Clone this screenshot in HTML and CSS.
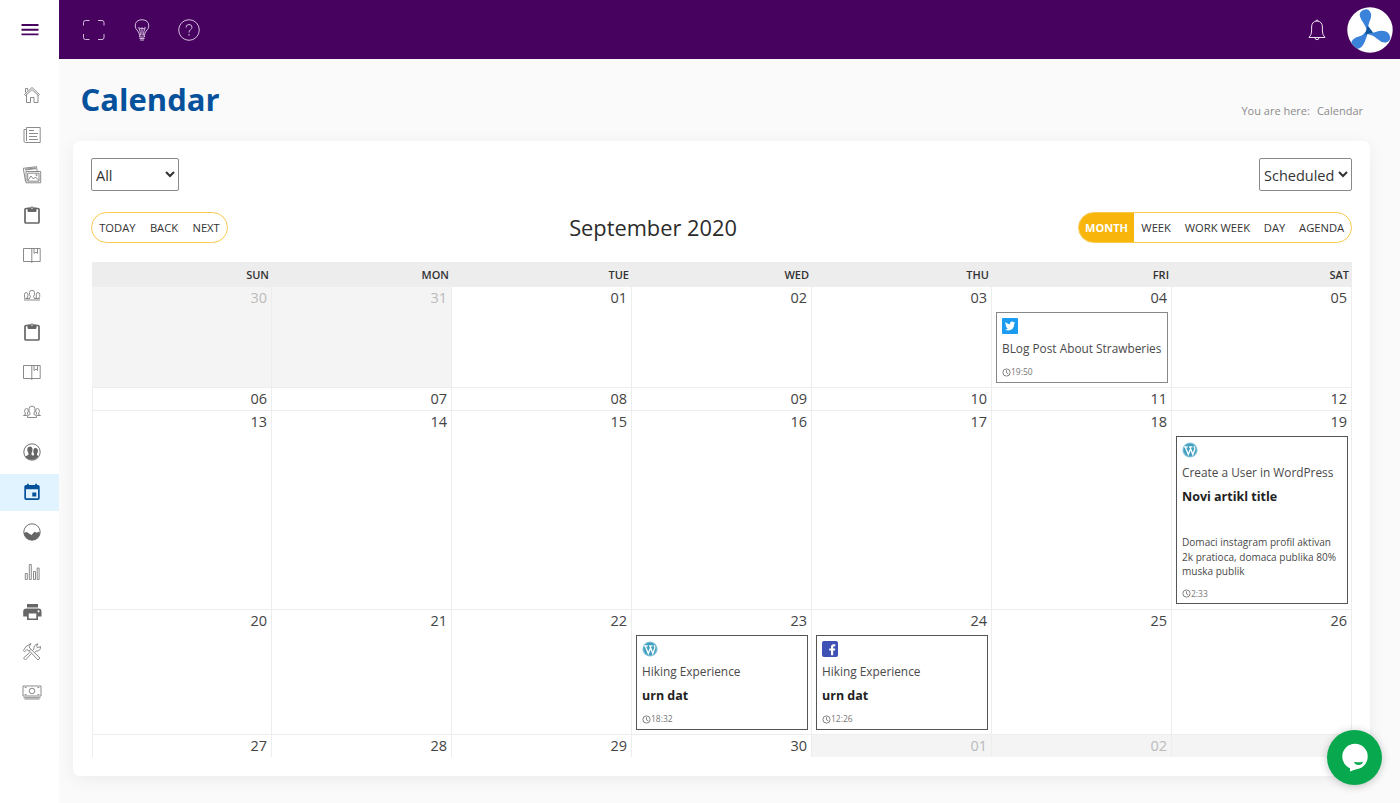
FILE: index.html
```html
<!DOCTYPE html>
<html lang="en">
<head>
<meta charset="utf-8">
<title>Calendar</title>
<link rel="stylesheet" href="styles.css">
</head>
<body>
<div class="app">
  <aside class="sidebar">
    <div class="burger"><svg width="18" height="12" viewBox="0 0 18 12"><path d="M.5 1H17.500M.5 5.700H17.500M.5 10.400H17.500" stroke="#470460" stroke-width="1.900" fill="none"/></svg></div>
    <nav class="menu">
      <a class="item"><svg viewBox="0 0 20 20"><path d="M2.500 9.500 10 2.500l7.500 7-1 1L10 4.700l-6.500 5.800zM3.500 7.500V3.500h2.200v2M4.500 10v7.500h4v-5h3.500v5h4V10"/></svg></a>
      <a class="item"><svg viewBox="0 0 20 20"><path d="M4.500 2.500h13.700v15H3.500q-1.500 0-1.500-1.500V4.500h2.500zM4.500 4.500V16M7 5.500h5M7 8.500h9M7 11.500h8M7 14.500h9"/></svg></a>
      <a class="item"><svg viewBox="0 0 20 20"><path d="M4 6.500h14.700v11.300H4zM5.700 8.200H17v8H5.700zM3.500 16.500 1.300 3.300 14.500 1.700l.7 4.500M3 5l11-1.400M3.200 4.200l10.500-1.300M6 15.500l3-4.500 2.500 3 2-2 3.500 3.500"/><circle cx="14.500" cy="10" r=".7"/></svg></a>
      <a class="item dark"><svg viewBox="0 0 20 20"><rect class="thick" x="3" y="3.500" width="14" height="14.500" rx="1"/><path class="solid" d="M6 3h2.500a1.600 1.600 0 0 1 3 0H14v3.500H6z"/><circle cx="10" cy="3.200" r=".7" fill="#fff" stroke="none"/></svg></a>
      <a class="item"><svg viewBox="0 0 20 20"><path d="M1.500 3.500h16.700v13H1.500zM9.800 3.500v14.500M12 3.500v5l2-1.500 1.500 1.500v-5"/></svg></a>
      <a class="item"><svg viewBox="0 0 20 20"><path d="M2.500 12.500V9.500q0-2 1.700-2t1.700 2v1.500l-1 2.500M7.500 13l1-1.200-1-2.200V7.500q0-2.200 2.500-2.200t2.500 2.200v2.100l-1 2.200 1 1.200M14.300 13.500V9.500q0-2 1.700-2t1.700 2v2l-1 1.800M2 13.300l6 .2M12 13.500h5.700M2 15h16"/></svg></a>
      <a class="item dark tight"><svg viewBox="0 0 20 20"><rect class="thick" x="3" y="3.500" width="14" height="14.500" rx="1"/><path class="solid" d="M6 3h2.500a1.600 1.600 0 0 1 3 0H14v3.500H6z"/><circle cx="10" cy="3.200" r=".7" fill="#fff" stroke="none"/></svg></a>
      <a class="item"><svg viewBox="0 0 20 20"><path d="M1.500 3.500h16.700v13H1.500zM9.800 3.500v14.500M12 3.500v5l2-1.500 1.500 1.500v-5"/></svg></a>
      <a class="item"><svg viewBox="0 0 20 20"><path d="M5.500 15.500v-2l2.500-1V11L7 9V7q0-2.800 3-2.800T13 7v2l-1 2v1.500l2.500 1v2zM1.500 13.500l1.800-1V11l-.8-1.500q0-3 2-3 1.800 0 1.800 2.500l-.8 2v1.500M18.500 13.500l-1.800-1V11l.8-1.500q0-3-2-3-1.800 0-1.800 2.500l.8 2v1.500M1.500 13.500H5M15 13.500h3.500"/></svg></a>
      <a class="item dark"><svg viewBox="0 0 20 20"><circle cx="10" cy="10" r="8.200"/><path class="solid" stroke="none" d="M3 14.800l3.500-2v-1.500Q5 9 5.300 6.800 6 4.500 8 4.500t2.500 2.300q.3 2.200-1 4.500v1.500l1.700.9.800-.7v-1Q10.800 9.500 11.500 7.500q.6-1.600 2.200-1.400 1.700.2 2.200 2 .3 2-.9 3.900v1l1.500 1q-2.500 3.800-6.500 3.800-4.500 0-7-3z"/></svg></a>
      <a class="item active"><svg viewBox="0 0 20 20"><path class="solid" d="M4 3h1V1.700h1.800V3h6.400V1.700H15V3h1q1.700 0 1.700 1.700v11.600Q17.700 18 16 18H4q-1.700 0-1.700-1.700V4.700Q2.300 3 4 3zM4 7.300v9h12v-9zM10.300 10.500h4v4h-4z" fill-rule="evenodd" stroke="none"/></svg></a>
      <a class="item dark"><svg viewBox="0 0 20 20"><circle cx="10" cy="10" r="8.200"/><path class="solid" stroke="none" d="M1.800 11l1.200-.5 1.800-.5 2.200 1.500L9.500 13l3-3.200 2.300 1 1.500-1 1.700.7q-.5 7.500-8 7.700-7-.2-8.200-7.200z"/></svg></a>
      <a class="item"><svg viewBox="0 0 20 20"><path d="M3.300 11.500h2v6h-2zM7.300 2.500h2v15h-2zM11.500 9.500h2v8h-2zM15.200 6h1.900v11.500h-1.900z"/></svg></a>
      <a class="item dark"><svg viewBox="0 0 20 20"><path class="solid" stroke="none" fill-rule="evenodd" d="M5 2h11v3.500H5zM4.500 6.500h12q3 0 3 3V14.500H16V18H5V14.500H1.200v-5q0-3 3.300-3zM6.700 11.500v5h7.600v-5zM16.500 8.300a1 1 0 1 0 .1 0z"/></svg></a>
      <a class="item"><svg viewBox="0 0 20 20"><path d="M1.500 8.500 4 4.500l5-3-2 3.500 2 2.200-2 2-2-1.800-2.500 2.500zM9 7.300l9 8.700-2 2-8.500-9M10.500 8.500 12 7q-.7-4 4-5.200L14.500 4l1.200 1.800 2.800-1.300q.5 4.500-4.500 4.700l-1.500 1.300M9.500 11.500l-6 6.500-2-2 6.300-5.500"/></svg></a>
      <a class="item"><svg viewBox="0 0 20 20"><path d="M1 4h18v10H1zM1.500 15.700h17M2.500 17h15M3 6v-.5h1.500M17 6v-.5h-1.500M3 12v.5h1.500M17 12v.5h-1.500"/><circle cx="10" cy="9" r="2.800"/></svg></a>
    </nav>
  </aside>
  <div class="content">
    <header class="topbar">
      <div class="tools">
        <svg width="24" height="24" viewBox="0 0 24 24"><path d="M1.500 7.500V4.500q0-2 2-2h4M16 2.500h4q2 0 2 2v3M22 16v3.500q0 2-2 2h-4M7.500 21.500h-4q-2 0-2-2V16"/></svg>
        <svg width="24" height="24" viewBox="0 0 24 24"><path d="M9.500 19v-1.500q0-2.200-1.700-4.500Q5.200 10.500 5.200 8q0-6 6.800-6.300Q18.800 2 18.800 8q0 2.500-2.600 5-1.700 2.300-1.700 4.500V19zM10.500 17.500Q10.500 13 8.700 9.500l2.600 1.700.7-1.700.7 1.700 2.600-1.700Q13.500 13 13.500 17.500M12 11.500v6M9.500 20.500h5M10 22h4"/></svg>
        <svg width="24" height="24" viewBox="0 0 24 24"><circle cx="12" cy="12" r="10.300"/><path d="M9 9.500q0-3 3-3t3 2.700q0 1.600-1.700 2.600Q12 12.800 12 14.500M12 16v1.700"/></svg>
      </div>
      <div class="user">
        <svg class="bell" width="20" height="24" viewBox="0 0 20 24"><path d="M2 19.500Q4.600 17 4.600 13V9q0-5.500 5.400-6 5.400.5 5.400 6v4q0 4 2.600 6.500zM8 19.700a2 2 0 0 0 4 0M9 3a1 1 0 0 1 2 0"/></svg>
        <svg class="avatar" width="46" height="46" viewBox="0 0 46 46"><defs><clipPath id="round"><circle cx="23" cy="23" r="22.700"/></clipPath></defs><circle cx="23" cy="23" r="22.700" fill="#fff"/><g clip-path="url(#round)" fill="#3b82da"><path d="M20.500 26Q19.500 20 14.500 13 11 7 14.500 4 20 .5 23 4.500q2.500 4-.5 10-2.300 5-1 10z"/><path d="M19 27q6-.500 13-3 7-1 10 3 3 5.500-1.500 8-5 2-10-3-4-3.800-10-5z"/><path d="M20 22.500q1.500 3-1 9-2.500 7.500-6 9.500-5 2.500-8-1.500-2-3.500 1-7 2.500-2.500 6.500-3.200 4.500-1.300 7.500-6.800z"/></g><path d="M20.700 18.500l5.500 7.300-8.200 2z" fill="#0d57a0"/></svg>
      </div>
    </header>
    <div class="heading">
      <h1>Calendar</h1>
      <div class="crumbs"><span>You are here:</span><span>Calendar</span></div>
    </div>
    <main class="card">
      <div class="filters">
        <select class="filter-all"><option>All</option></select>
        <select class="filter-status"><option>Scheduled</option></select>
      </div>
      <div class="toolbar">
        <div class="group left"><button>TODAY</button><button>BACK</button><button>NEXT</button></div>
        <div class="label">September 2020</div>
        <div class="group right"><button class="on">MONTH</button><button>WEEK</button><button>WORK WEEK</button><button>DAY</button><button>AGENDA</button></div>
      </div>
      <div class="calendar">
        <div class="days"><span>SUN</span><span>MON</span><span>TUE</span><span>WED</span><span>THU</span><span>FRI</span><span>SAT</span></div>
        <div class="week w1">
          <div class="cell off">30</div><div class="cell off">31</div><div class="cell">01</div><div class="cell">02</div><div class="cell">03</div>
          <div class="cell">04
            <article class="event soft"><svg class="badge" viewBox="0 0 16 16"><rect width="16" height="16" rx="1" fill="#1c9cf0"/><path fill="#fff" d="M3.500 4q2 2.200 4.500 2.300Q8 3.500 10 3.500q1 0 1.600.7l1.200-.4-.6 1.100 1-.2-1 1.100q.2 6-5.700 6.600-2 0-3.500-1 2 .1 3-.9-1.300-.1-1.700-1.300h.8Q3.500 8.600 3.500 7l.8.200Q2.800 6 3.500 4z"/></svg>
              <p class="name">BLog Post About Strawberies</p><p class="time"><svg viewBox="0 0 10 10"><circle cx="5" cy="5" r="4"/><path d="M5 2.500V5.300l2 1.200"/></svg>19:50</p></article>
          </div>
          <div class="cell">05</div>
        </div>
        <div class="week w2"><div class="cell">06</div><div class="cell">07</div><div class="cell">08</div><div class="cell">09</div><div class="cell">10</div><div class="cell">11</div><div class="cell">12</div></div>
        <div class="week w3">
          <div class="cell">13</div><div class="cell">14</div><div class="cell">15</div><div class="cell">16</div><div class="cell">17</div><div class="cell">18</div>
          <div class="cell">19
            <article class="event"><svg class="badge" viewBox="0 0 16 16"><circle cx="8" cy="8" r="7.600" fill="#8cc5da"/><circle cx="8" cy="8" r="6.500" fill="#419fc0"/><path d="M2 4.800h3.800M3.300 5l3 7.500L8.500 7M7 4.800h3.500M8 5l2.800 7.500L12.800 7q.3-1.500-1-2.800" fill="none" stroke="#fff" stroke-width="1.300"/></svg>
              <p class="name">Create a User in WordPress</p><p class="title">Novi artikl title</p>
              <p class="text">Domaci instagram profil aktivan 2k pratioca, domaca publika 80% muska publik</p>
              <p class="time"><svg viewBox="0 0 10 10"><circle cx="5" cy="5" r="4"/><path d="M5 2.500V5.300l2 1.200"/></svg>2:33</p></article>
          </div>
        </div>
        <div class="week w4">
          <div class="cell">20</div><div class="cell">21</div><div class="cell">22</div>
          <div class="cell">23
            <article class="event"><svg class="badge" viewBox="0 0 16 16"><circle cx="8" cy="8" r="7.600" fill="#8cc5da"/><circle cx="8" cy="8" r="6.500" fill="#419fc0"/><path d="M2 4.800h3.800M3.300 5l3 7.500L8.500 7M7 4.800h3.500M8 5l2.800 7.500L12.800 7q.3-1.500-1-2.800" fill="none" stroke="#fff" stroke-width="1.300"/></svg>
              <p class="name">Hiking Experience</p><p class="title">urn dat</p><p class="time"><svg viewBox="0 0 10 10"><circle cx="5" cy="5" r="4"/><path d="M5 2.500V5.300l2 1.200"/></svg>18:32</p></article>
          </div>
          <div class="cell">24
            <article class="event"><svg class="badge" viewBox="0 0 16 16"><rect width="16" height="16" rx="2" fill="#3f51b5"/><path d="M9 14.200V9.500H7.200V7.400H9V6q0-2.800 2.700-2.800h1.600v2.100h-1.100q-1 0-1 1v1.100h2.100l-.3 2.100h-1.800v4.700z" fill="#fff"/></svg>
              <p class="name">Hiking Experience</p><p class="title">urn dat</p><p class="time"><svg viewBox="0 0 10 10"><circle cx="5" cy="5" r="4"/><path d="M5 2.500V5.300l2 1.200"/></svg>12:26</p></article>
          </div>
          <div class="cell">25</div><div class="cell">26</div>
        </div>
        <div class="week w5"><div class="cell">27</div><div class="cell">28</div><div class="cell">29</div><div class="cell">30</div><div class="cell off">01</div><div class="cell off">02</div><div class="cell off">03</div></div>
      </div>
    </main>
  </div>
  <div class="chat"><svg width="28" height="29" viewBox="0 0 28 29"><circle cx="14" cy="13.500" r="12.700" fill="#fff"/><path d="M9 23v5.500L21 24z" fill="#fff"/><path d="M13 18.700q4.500 1.300 9 0-1 3.300-4.500 3.300T13 18.700z" fill="#08a84f"/></svg></div>
</div>
</body>
</html>
```
FILE: styles.css
```css
* { box-sizing: border-box; }
body { margin: 0; font-family: "Open Sans", "Noto Sans", sans-serif; color: #333; background: #fafafa; }
p, h1 { margin: 0; }
.app { display: flex; height: 803px; overflow: hidden; }

.sidebar { width: 59px; flex: none; background: #fff; }
.burger { height: 59px; padding: 23.500px 0 0 21px; }
.burger svg { display: block; }
.menu { display: flex; flex-direction: column; gap: 3px; padding-top: 18px; }
.item { display: flex; align-items: center; justify-content: center; height: 37px; padding: 0 0 1.500px 5.500px; }
.item svg { width: 20px; height: 20px; fill: none; stroke: #858585; stroke-width: .95; }
.item.dark svg { stroke: #666; }
.item .solid { fill: #666; }
.item .thick { stroke-width: 1.700; }
.item.tight { margin-top: -3px; }
.item.active { background: #e1f3fe; }
.item.active .solid { fill: #05519b; }

.content { flex: 1; min-width: 0; }
.topbar { height: 59px; background: #46025e; display: flex; justify-content: space-between; align-items: center; padding: 0 7px 0 23px; }
.tools { display: flex; gap: 23.500px; }
.topbar .tools svg, .bell { fill: none; stroke: #d3bddc; stroke-width: 1; }
.topbar .bell { stroke: #eee3f1; }
.user { display: flex; align-items: center; gap: 20.500px; }

.heading { height: 82px; display: flex; justify-content: space-between; padding: 18px 37px 0 21.500px; }
h1 { font-size: 31px; line-height: 44px; font-weight: 700; color: #05519b; }
.crumbs { display: flex; gap: 7px; font-size: 11px; line-height: 16px; color: #8b8b8b; padding-top: 26px; }

.card { margin: 0 30px 0 14px; height: 635px; padding: 17px 18px 0; background: #fff; border-radius: 7px; box-shadow: 0 4px 18px rgba(0, 0, 0, .06); }
.filters { display: flex; justify-content: space-between; }
select { font: 14.500px "Open Sans", sans-serif; height: 33px; color: #333; background: #fff; border: 1px solid #8a8a8a; border-radius: 2px; padding: 1px 0 0; }
.filter-all { width: 88px; }
.filter-status { width: 93px; }
.toolbar { display: flex; justify-content: space-between; align-items: center; margin-top: 21px; height: 31px; position: relative; }
.group { display: flex; height: 31px; border: 1px solid #f9ca50; border-radius: 16px; overflow: hidden; }
.group button { border: 0; background: none; font: 500 11.200px "Open Sans", sans-serif; color: #333; padding: 0 6.900px 1px; }
.group.left button { padding: 0 7.200px 1px; }
.group .on { background: #f8b50b; color: #fff; font-size: 11px; font-weight: 700; padding: 0 6.500px 1px; }
.label { font-size: 21.800px; color: #2b2b2b; position: absolute; left: 0; right: 0; text-align: center; pointer-events: none; padding-right: 137px; }

.calendar { margin: 19px 0 0 1px; width: 1260px; }
.days { display: grid; grid-template-columns: repeat(7, 1fr); height: 25px; background: #ededed; font-size: 11px; font-weight: 600; line-height: 26px; text-align: right; }
.days span { padding-right: 3px; }
.week { display: grid; grid-template-columns: repeat(7, 1fr); box-shadow: inset 1px 0 #ededed; }
.cell { border-right: 1px solid #ededed; border-bottom: 1px solid #ededed; text-align: right; font-size: 14.500px; line-height: 22px; padding-right: 4px; color: #444; min-width: 0; }
.off { background: #f4f4f4; color: #bbb; }
.w1 { height: 101px; }
.w2 { height: 23px; }
.w3 { height: 199px; }
.w4 { height: 125px; }
.w5 { height: 22px; overflow: hidden; }
.event { margin: 3px -1px 0 4px; border: 1px solid #555; text-align: left; padding: 5px 0 0 5px; height: 71px; color: #4a4a4a; }
.event.soft { border-color: #888; }
.w3 .event { height: 168px; }
.w4 .event { height: 95px; }
.badge { display: block; width: 16px; height: 16px; }
.name { font-size: 11.850px; line-height: 16px; margin: 5.500px 0 1.500px; white-space: nowrap; }
.title { font-size: 12.500px; line-height: 16px; font-weight: 700; color: #222; margin-top: 8px; }
.name + .title { padding-top: 0; margin-top: 9.500px; }
.name + .time { margin-top: 10.500px; }
.text { font-size: 10.050px; line-height: 14.600px; margin-top: 30px; padding-right: 6px; }
.time { display: flex; align-items: center; font-size: 8.500px; line-height: 12px; color: #777; margin-top: 9px; }
.time svg { width: 9px; height: 9px; fill: none; stroke: #666; stroke-width: .9; }

.chat { position: fixed; left: 1327px; top: 730px; width: 55px; height: 55px; border-radius: 50%; background: #08a84f; display: flex; align-items: center; justify-content: center; box-shadow: 0 1px 8px rgba(0, 0, 0, .22); }
```
